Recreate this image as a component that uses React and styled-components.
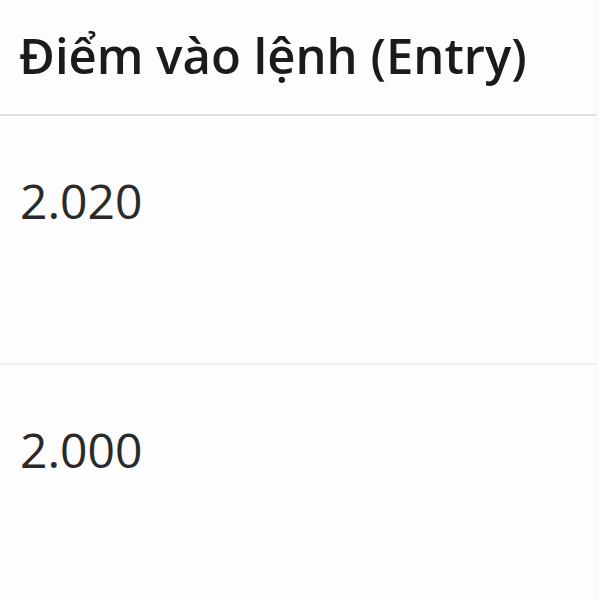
import React from 'react'
import styled, { createGlobalStyle } from 'styled-components'

const GlobalStyle = createGlobalStyle`
  html, body {
    margin: 0;
    padding: 0;
    background: #fdfdfd;
  }
  body {
    font-family: "Open Sans", "Noto Sans", sans-serif;
    color: #222;
  }
`

const Table = styled.div`
  width: 596px;
  border-right: 1px solid #f2f2f2;
`

const HeadCell = styled.div`
  height: 116px;
  display: flex;
  align-items: center;
  padding: 0 0 4px 19px;
  box-sizing: border-box;
  font-size: 49px;
  font-weight: 600;
  color: #1b1b1b;
  border-bottom: 2px solid #e2e2e2;
`

const Row = styled.div`
  height: 249px;
  box-sizing: border-box;
  padding: 52px 0 0 20px;
  font-size: 48px;
  font-weight: 400;
  color: #2a2a2a;
  border-bottom: ${p => (p.$last ? 'none' : '2px solid #f1f1f1')};
`

const rows = ['2.020', '2.000']

export default function App() {
  return (
    <>
      <GlobalStyle />
      <Table>
        <HeadCell>Điểm vào lệnh (Entry)</HeadCell>
        {rows.map((v, i) => (
          <Row key={v} $last={i === rows.length - 1}>{v}</Row>
        ))}
      </Table>
    </>
  )
}
